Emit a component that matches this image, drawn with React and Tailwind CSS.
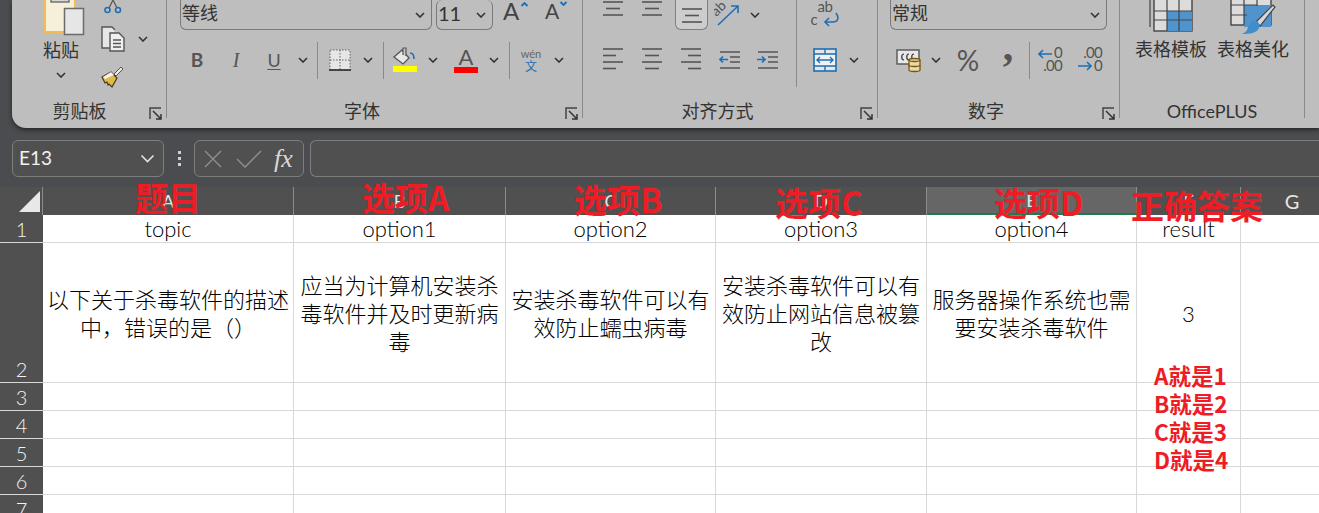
const Chevron = ({ color = '#333', big = false }) => (
  <svg width={big ? 15 : 10} height={big ? 9 : 6} viewBox="0 0 10 6" fill="none" stroke={color} strokeWidth={big ? 1.100 : 1.600}><path d="M1 1l4 4 4-4" /></svg>
)

const Slot = ({ className, children }) => (
  <div className={`flex h-[30px] shrink-0 items-center justify-center ${className}`}>{children}</div>
)

const Sep = () => <div className="h-[37px] w-px bg-[#8a8a8a]" />

// alignment glyph: each row is [from, to] on a 6.5px pitch
const Lines = ({ rows }) => (
  <svg width="22" height={rows.length * 6.500} viewBox={`0 0 22 ${rows.length * 6.500}`} stroke="#555" strokeWidth="1.600">
    {rows.map((r, i) => (
      <path key={i} d={`M${r[0]} ${i * 6.500 + 2}H${r[1]}`} />
    ))}
  </svg>
)

const threeLines = [[1, 21], [4, 18], [1, 21]]

const Launcher = () => (
  <svg className="absolute right-[4px] bottom-[-2px]" width="13" height="13" viewBox="0 0 13 13" fill="none" stroke="#444" strokeWidth="1.500">
    <path d="M1 12V1h11" />
    <path d="M4 4l8 8M7 12h5V7" stroke="#333" />
  </svg>
)

const GroupLabel = ({ className, children }) => (
  <div className={`absolute bottom-[-4px] left-0 right-0 text-center text-[18px] leading-[22px] text-[#333] ${className}`}>{children}</div>
)

const Combo = ({ className, label, textClass = 'text-[18px]' }) => (
  <div className={`flex h-[30px] items-center justify-between rounded-b-md border-x border-b border-[#7a7a7a] pl-[1px] pr-[6px] ${className}`}>
    <span className={`-mt-[3px] ${textClass} leading-none text-[#333]`}>{label}</span>
    <Chevron />
  </div>
)

const PasteIcon = () => (
  <svg width="48" height="36" viewBox="0 0 48 36">
    <rect x="8" y="-6" width="30" height="38" fill="#f6efd9" stroke="#f2bb55" strokeWidth="2" />
    <rect x="14" y="-4" width="18" height="6" fill="#d8d8d8" stroke="#555" strokeWidth="1.200" />
    <rect x="27.500" y="8.500" width="19" height="26" fill="#e6e6e6" stroke="#6b6b6b" strokeWidth="1.500" />
  </svg>
)

const CutIcon = () => (
  <svg width="18" height="14" viewBox="0 0 18 14" fill="none">
    <path d="M5 8L9 0M13 8L9 0" stroke="#555" strokeWidth="1.200" />
    <circle cx="3.500" cy="10" r="2.500" stroke="#1f6fb5" strokeWidth="1.600" />
    <circle cx="14" cy="10" r="2.500" stroke="#1f6fb5" strokeWidth="1.600" />
  </svg>
)

const CopyIcon = () => (
  <svg width="26" height="26" viewBox="0 0 26 26" fill="none" stroke="#555" strokeWidth="1.400">
    <path d="M9 22H2V1h10l3 3" fill="#e6e6e6" />
    <path d="M10 7h9l5 5v13H10z" fill="#efefef" />
    <path d="M13 14h8M13 17.500h8M13 21h8" />
  </svg>
)

const BrushIcon = () => (
  <svg width="24" height="24" viewBox="0 0 24 24">
    <path d="M2 12l9-5 6 6-5 9-3-3-1 1-1-3-2 1z" fill="#e0b84c" stroke="#4a3a1a" strokeWidth="1.200" />
    <path d="M3 12l8-5 3 3-9 4z" fill="#f2f2f2" />
    <path d="M14 9l7-7 2 2-7 7z" fill="#e8e8e8" stroke="#555" strokeWidth="1" />
  </svg>
)

const BorderIcon = () => (
  <svg width="22" height="22" viewBox="0 0 22 22" fill="none">
    <rect x="1" y="1" width="20" height="20" fill="#e6e6e6" stroke="#666" strokeDasharray="1.500 1.500" />
    <path d="M11 1v20M1 11h20" stroke="#666" strokeDasharray="1.500 1.500" />
    <path d="M0 21h22" stroke="#222" strokeWidth="1.500" />
  </svg>
)

const FillIcon = () => (
  <svg width="26" height="26" viewBox="0 0 26 26" fill="none">
    <path d="M2 10l8-7 7 8-6 6z" fill="#e8e8e8" stroke="#555" strokeWidth="1.300" />
    <path d="M11 8V1h3v8" fill="#c8c8c8" stroke="#555" strokeWidth="1.200" />
    <path d="M18 6c3 0 4 2 4 6" stroke="#1f6fb5" strokeWidth="1.600" />
    <rect x="1" y="19" width="24" height="6" fill="#ffff00" />
  </svg>
)

const WrapIcon = () => (
  <svg width="22" height="16" viewBox="0 0 22 16" fill="none" stroke="#1f6fb5" strokeWidth="1.600">
    <path d="M18 1c4 6 1 9-3 9H7M11 6l-4 4 4 4" />
  </svg>
)

const MergeIcon = () => (
  <svg width="24" height="24" viewBox="0 0 24 24" fill="none">
    <rect x="1" y="1" width="22" height="22" fill="#e6e6e6" stroke="#1f6fb5" strokeWidth="1.600" />
    <path d="M1 6h22M1 18h22M12 1v5M12 18v5" stroke="#1f6fb5" strokeWidth="1.400" />
    <rect x="2" y="7" width="20" height="10" fill="#f2f2f2" />
    <path d="M4 12h16M7 9l-3 3 3 3M17 9l3 3-3 3" stroke="#1f6fb5" strokeWidth="1.400" />
  </svg>
)

const OrientIcon = () => (
  <svg width="28" height="26" viewBox="0 0 28 26" fill="none">
    <path d="M4 23L24 4M17 4h7v7" stroke="#1f6fb5" strokeWidth="1.600" />
    <text x="0" y="11" fontSize="14" fill="#555" transform="rotate(-45 6 10)">ab</text>
  </svg>
)

const CellStyleIcon = () => (
  <svg width="26" height="26" viewBox="0 0 26 26" fill="none">
    <rect x="1" y="3" width="22" height="14" fill="#e8e8e8" stroke="#555" strokeWidth="1.400" />
    <path d="M8 7c-3 0-3 6 0 6M13 7c-3 0-3 6 0 6M18 7c-3 0-3 6 0 6" stroke="#333" strokeWidth="1.200" />
    <path d="M13 13c0-2 11-2 11 0v10c0 2-11 2-11 0z" fill="#e8d9a8" stroke="#7a5510" strokeWidth="1.300" />
    <path d="M13 13c0 2 11 2 11 0M13 18c0 2 11 2 11 0" stroke="#7a5510" strokeWidth="1.300" />
  </svg>
)

const DecimalUp = () => (
  <div className="relative h-[28px] w-[24px] text-[15px] leading-[13px] tracking-tighter text-[#555]">
    <div className="text-right">0</div>
    <div className="text-right">.00</div>
    <svg className="absolute left-0 top-[3px]" width="14" height="10" viewBox="0 0 14 10" fill="none" stroke="#1f6fb5" strokeWidth="1.600"><path d="M14 5H1M5 1L1 5l4 4" /></svg>
  </div>
)

const DecimalDown = () => (
  <div className="relative h-[28px] w-[24px] text-[15px] leading-[13px] tracking-tighter text-[#555]">
    <div className="text-right">.00</div>
    <div className="text-right">0</div>
    <svg className="absolute left-0 top-[15px]" width="14" height="10" viewBox="0 0 14 10" fill="none" stroke="#1f6fb5" strokeWidth="1.600"><path d="M0 5h13M9 1l4 4-4 4" /></svg>
  </div>
)

const TableIcon = () => (
  <svg width="44" height="32" viewBox="0 0 44 32" fill="none">
    <rect x="5" y="-8" width="38" height="39" fill="#dcdcdc" stroke="#444" strokeWidth="1.400" />
    <rect x="18" y="11" width="25" height="20" fill="#4f94cd" />
    <path d="M5 11h38M5 20h38M18 -8v39M30 -8v39" stroke="#444" strokeWidth="1.200" />
    <path d="M1 -4v31" stroke="#444" strokeWidth="1.200" />
  </svg>
)

const BeautifyIcon = () => (
  <svg width="46" height="36" viewBox="0 0 46 36" fill="none">
    <rect x="1" y="-8" width="40" height="33" fill="#dcdcdc" stroke="#444" strokeWidth="1.400" />
    <rect x="14" y="5" width="27" height="22" fill="#4f94cd" />
    <path d="M1 5h26M1 15h16M14 -8v33M27 -8v14" stroke="#444" strokeWidth="1.200" />
    <path d="M26 22L43 5l2 2-15 19z" fill="#d8d8d8" stroke="#444" strokeWidth="1.200" />
    <path d="M24 21c4 0 7 3 5 7-2 5-9 6-17 6 4-2 5-3 6-7 1-3 3-6 6-6z" fill="#3f8ecb" />
  </svg>
)

const Ribbon = () => (
  <div className="ml-[12px] flex h-[128px] overflow-hidden rounded-bl-[14px] bg-[#bebebe] shadow-[0_2px_4px_rgba(0,0,0,0.5)]">
    {/* clipboard */}
    <div className="relative flex h-[118px] w-[155px] shrink-0 border-r border-[#8a8a8a]">
      <div className="ml-[28px] flex w-[42px] flex-col items-center">
        <PasteIcon />
        <div className="mt-[3px] text-[18px] leading-[22px] text-[#333]">粘贴</div>
        <div className="mt-[11px]"><Chevron /></div>
      </div>
      <div className="ml-[18px] flex flex-col">
        <div className="ml-[4px]"><CutIcon /></div>
        <div className="mt-[12px] flex items-center">
          <CopyIcon />
          <div className="ml-[12px]"><Chevron /></div>
        </div>
        <div className="mt-[13px]"><BrushIcon /></div>
      </div>
      <GroupLabel className="pr-[19px]">剪贴板</GroupLabel>
      <Launcher />
    </div>

    {/* font */}
    <div className="relative h-[118px] w-[416px] shrink-0 border-r border-[#8a8a8a]">
      <div className="flex pl-[13px]">
        <Combo className="w-[252px]" label="等线" />
        <Combo className="ml-[4px] w-[57px] rounded-md" label="11" textClass="text-[20px]" />
        <div className="ml-[10px] flex h-[21px] w-[17px] items-end text-[24px] leading-[21px] text-[#444]">A</div>
        <svg className="mt-[1px]" width="9" height="6" viewBox="0 0 8 6" fill="none" stroke="#1f6fb5" strokeWidth="1.800"><path d="M1 5l3-3 3 3" /></svg>
        <div className="ml-[16px] flex h-[21px] w-[14px] items-end text-[21px] leading-[21px] text-[#444]">A</div>
        <svg className="mt-[1px]" width="9" height="6" viewBox="0 0 8 6" fill="none" stroke="#1f6fb5" strokeWidth="1.800"><path d="M1 1l3 3 3-3" /></svg>
      </div>
      <div className="mt-[15px] flex pl-[13px] text-[#555]">
        <Slot className="w-[34px] text-[19px] font-bold">B</Slot>
        <Slot className="w-[44px] font-['Liberation_Serif'] text-[20px] italic">I</Slot>
        <Slot className="w-[32px] text-[18px] underline underline-offset-2">U</Slot>
        <Slot className="w-[26px]"><Chevron /></Slot>
        <Slot className="w-[3px]"><Sep /></Slot>
        <Slot className="w-[42px]"><BorderIcon /></Slot>
        <Slot className="w-[14px]"><Chevron /></Slot>
        <Slot className="w-[16px]"><Sep /></Slot>
        <Slot className="w-[28px]"><FillIcon /></Slot>
        <Slot className="w-[28px]"><Chevron /></Slot>
        <Slot className="w-[38px]">
          <div className="flex h-[26px] w-[24px] flex-col items-center">
            <span className="h-[20px] text-[22px] leading-[20px] text-[#555]">A</span>
            <span className="h-[6px] w-[24px] bg-[#ff0000]" />
          </div>
        </Slot>
        <Slot className="w-[18px]"><Chevron /></Slot>
        <Slot className="w-[12px]"><Sep /></Slot>
        <Slot className="w-[32px]">
          <div className="flex flex-col items-center text-center">
            <span className="text-[11px] leading-[12px] text-[#666]">wén</span>
            <span className="text-[12px] leading-[13px] text-[#1f6fb5]">文</span>
          </div>
        </Slot>
        <Slot className="w-[24px]"><Chevron /></Slot>
      </div>
      <GroupLabel className="pr-[25px]">字体</GroupLabel>
      <Launcher />
    </div>

    {/* alignment */}
    <div className="relative flex h-[118px] w-[295px] shrink-0 border-r border-[#8a8a8a]">
      <div className="h-[87px] w-[214px] shrink-0 border-r border-[#8a8a8a] pl-[14px]">
        <div className="flex">
          <Slot className="w-[32px] items-start"><Lines rows={threeLines} /></Slot>
          <Slot className="w-[46px] items-start"><Lines rows={threeLines} /></Slot>
          <Slot className="w-[33px] items-end rounded-b-md border-x border-b border-[#7f7f7f] bg-[#cdcdcd] pb-[3px]"><Lines rows={threeLines} /></Slot>
          <Slot className="w-[40px]"><OrientIcon /></Slot>
          <Slot className="w-[14px]"><Chevron /></Slot>
        </div>
        <div className="mt-[15px] flex">
          <Slot className="w-[32px]"><Lines rows={[[1, 21], [1, 14], [1, 21], [1, 14]]} /></Slot>
          <Slot className="w-[46px]"><Lines rows={[[1, 21], [4, 18], [1, 21], [4, 18]]} /></Slot>
          <Slot className="w-[32px]"><Lines rows={[[1, 21], [8, 21], [1, 21], [8, 21]]} /></Slot>
          <Slot className="w-[46px]">
            <svg width="22" height="22" viewBox="0 0 22 22" fill="none"><path d="M1 3h20M11 8h10M11 13h10M1 19h20" stroke="#555" strokeWidth="1.600" /><path d="M9 10.500H1M4 7.500l-3 3 3 3" stroke="#1f6fb5" strokeWidth="1.600" /></svg>
          </Slot>
          <Slot className="w-[30px]">
            <svg width="22" height="22" viewBox="0 0 22 22" fill="none"><path d="M1 3h20M11 8h10M11 13h10M1 19h20" stroke="#555" strokeWidth="1.600" /><path d="M0 10.500h8M5 7.500l3 3-3 3" stroke="#1f6fb5" strokeWidth="1.600" /></svg>
          </Slot>
        </div>
      </div>
      <div className="flex-1">
        <div className="flex h-[30px] flex-col items-center pr-[24px] pt-[1px]">
          <div className="text-[15px] leading-[11px] tracking-tight text-[#555]">ab</div>
          <div className="flex h-[15px] items-center">
            <span className="text-[15px] leading-none text-[#555]">c</span>
            <WrapIcon />
          </div>
        </div>
        <div className="mt-[15px] flex">
          <Slot className="ml-[16px] w-[24px]"><MergeIcon /></Slot>
          <Slot className="ml-[10px] w-[14px]"><Chevron /></Slot>
        </div>
      </div>
      <GroupLabel className="pr-[25px]">对齐方式</GroupLabel>
      <Launcher />
    </div>

    {/* number */}
    <div className="relative h-[118px] w-[242px] shrink-0 border-r border-[#8a8a8a]">
      <Combo className="ml-[12px] w-[217px]" label="常规" />
      <div className="ml-[12px] mt-[15px] flex text-[#555]">
        <Slot className="w-[38px]"><CellStyleIcon /></Slot>
        <Slot className="w-[16px]"><Chevron /></Slot>
        <Slot className="w-[48px] text-[28px]">%</Slot>
        <Slot className="w-[32px] font-['Liberation_Serif'] text-[42px] font-bold"><span className="-mt-[28px]">,</span></Slot>
        <Slot className="w-[10px]"><Sep /></Slot>
        <Slot className="w-[32px]"><DecimalUp /></Slot>
        <Slot className="w-[48px]"><DecimalDown /></Slot>
      </div>
      <GroupLabel className="pr-[25px]">数字</GroupLabel>
      <Launcher />
    </div>

    {/* officeplus */}
    <div className="relative flex h-[118px] w-[185px] shrink-0 border-r border-[#8a8a8a] pl-[8px]">
      <div className="flex w-[86px] flex-col items-center">
        <TableIcon />
        <div className="mt-[6px] text-[18px] leading-[22px] text-[#333]">表格模板</div>
      </div>
      <div className="flex w-[78px] flex-col items-center">
        <div className="h-[32px] overflow-visible"><BeautifyIcon /></div>
        <div className="mt-[6px] text-[18px] leading-[22px] text-[#333]">表格美化</div>
      </div>
      <GroupLabel>OfficePLUS</GroupLabel>
    </div>
  </div>
)

const FormulaBar = () => (
  <div className="mt-[12px] flex h-[37px] pl-[12px]">
    <div className="flex w-[152px] items-center justify-between rounded-md border border-[#7d7d7d] bg-[#505050] pl-[6px] pr-[8px]">
      <span className="text-[19px] text-[#f2f2f2]">E13</span>
      <Chevron color="#e0e0e0" big />
    </div>
    <div className="flex w-[30px] flex-col items-center justify-center gap-[3px]">
      <span className="h-[3px] w-[3px] bg-[#d0d0d0]" />
      <span className="h-[3px] w-[3px] bg-[#d0d0d0]" />
      <span className="h-[3px] w-[3px] bg-[#d0d0d0]" />
    </div>
    <div className="flex w-[110px] items-center rounded-md border border-[#7d7d7d] bg-[#505050] pl-[9px]">
      <svg width="18" height="18" viewBox="0 0 18 18" fill="none" stroke="#8f8f8f" strokeWidth="1.400"><path d="M1 1l16 16M17 1L1 17" /></svg>
      <svg className="ml-[14px]" width="26" height="18" viewBox="0 0 26 18" fill="none" stroke="#8f8f8f" strokeWidth="1.400"><path d="M1 9l8 8L25 1" /></svg>
      <span className="ml-[12px] font-['Liberation_Serif'] text-[26px] italic leading-none text-[#d8d8d8]">fx</span>
    </div>
    <div className="ml-[6px] flex-1 rounded-l-md border-y border-l border-[#7d7d7d] bg-[#505050]" />
  </div>
)

const colClass = 'border-r border-[#d9d9d9]'
const columns = ['A', 'B', 'C', 'D', 'E', 'F', 'G']
const headerWidths = ['w-[251px]', 'w-[212px]', 'w-[210px]', 'w-[211px]', 'w-[210px]', 'w-[104px]', 'flex-1']

const rowOne = ['topic', 'option1', 'option2', 'option3', 'option4', 'result', '']
const rowTwo = [
  '以下关于杀毒软件的描述中，错误的是（）',
  '应当为计算机安装杀毒软件并及时更新病毒',
  '安装杀毒软件可以有效防止蠕虫病毒',
  '安装杀毒软件可以有效防止网站信息被篡改',
  '服务器操作系统也需要安装杀毒软件',
  '3',
  '',
]

const Row = ({ num, height, cells, cellClass = '' }) => (
  <div className={`flex ${height}`}>
    <div className="flex w-[43px] shrink-0 items-end justify-center border-b border-[#d9d9d9] bg-[#505050] text-[20px] font-light leading-[26px] text-[#f2f2f2]">{num}</div>
    {headerWidths.map((w, i) => (
      <div key={i} className={`flex items-center justify-center border-b border-[#d9d9d9] text-center text-black ${w} ${i < 6 ? colClass : ''} ${w === 'flex-1' ? '' : 'shrink-0'} ${cellClass}`}>
        {cells ? cells[i] : ''}
      </div>
    ))}
  </div>
)

const Sheet = () => (
  <div className="bg-white">
    <div className="flex h-[28px] bg-[#505050]">
      <div className="flex w-[43px] shrink-0 items-end justify-end border-r border-[#8c8c8c] pb-[3px] pr-[2px]">
        <svg width="21" height="21" viewBox="0 0 21 21"><path d="M21 0v21H0z" fill="#e8e8e8" /></svg>
      </div>
      {columns.map((c, i) => (
        <div
          key={c}
          className={`flex items-center justify-center text-[#e6e6e6] ${headerWidths[i]} ${i < 6 ? 'border-r border-[#8c8c8c] text-[18px]' : 'pl-[24px] text-[20px]'} ${c === 'E' ? 'border-b-2 border-b-[#1f7a4d] bg-[#666666]' : ''}`}
        >
          {c}
        </div>
      ))}
    </div>
    <Row num="1" height="h-[28px]" cells={rowOne} cellClass="text-[22px] font-light leading-none" />
    <Row num="2" height="h-[140px]" cells={rowTwo} cellClass="px-[4px] pt-[2px] text-[22px] font-light leading-[28px]" />
    <Row num="3" height="h-[28px]" />
    <Row num="4" height="h-[28px]" />
    <Row num="5" height="h-[28px]" />
    <Row num="6" height="h-[28px]" />
    <Row num="7" height="h-[28px]" />
  </div>
)

const Note = ({ className, children }) => (
  <div className={`absolute whitespace-nowrap font-['Noto_Sans_CJK_SC'] text-[33px] font-bold leading-none text-[#ee1c25] ${className}`}>{children}</div>
)

export default function App() {
  return (
    <div className="relative h-[513px] w-[1319px] overflow-hidden bg-[#4a4c4f] font-['Lato','Noto_Sans_CJK_SC',sans-serif]">
      <Ribbon />
      <FormulaBar />
      <div className="mt-[10px]">
        <Sheet />
      </div>

      {/* red annotations on top of the sheet */}
      <Note className="left-[135px] top-[181px]">题目</Note>
      <Note className="left-[362px] top-[181px]">选项A</Note>
      <Note className="left-[574px] top-[183px]">选项B</Note>
      <Note className="left-[775px] top-[186px]">选项C</Note>
      <Note className="left-[994px] top-[186px]">选项D</Note>
      <Note className="left-[1131px] top-[189px]">正确答案</Note>
      <div className="absolute left-[1154px] top-[361px] font-['Noto_Sans_CJK_SC'] text-[22.500px] font-bold leading-[28px] text-[#ee1c25]">
        <div>A就是1</div>
        <div>B就是2</div>
        <div>C就是3</div>
        <div>D就是4</div>
      </div>
    </div>
  )
}
